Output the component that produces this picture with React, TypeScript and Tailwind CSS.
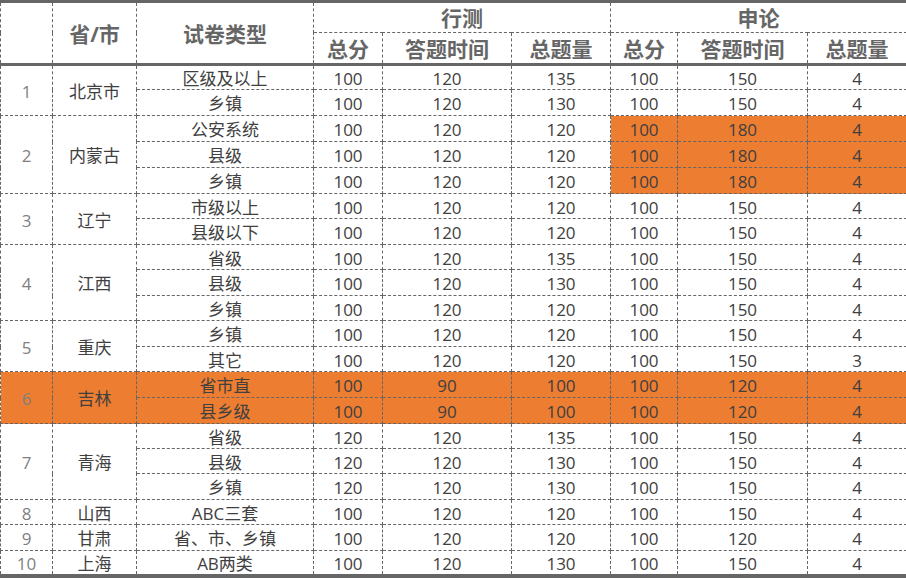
import React from "react"

type Row = { sub: string; v: string[] }
type Group = { no: string; name: string; rows: Row[]; hl?: "shenlun" | "all" }

const groups: Group[] = [
  {
    no: "1",
    name: "北京市",
    rows: [
      { sub: "区级及以上", v: ["100", "120", "135", "100", "150", "4"] },
      { sub: "乡镇", v: ["100", "120", "130", "100", "150", "4"] },
    ],
  },
  {
    no: "2",
    name: "内蒙古",
    hl: "shenlun",
    rows: [
      { sub: "公安系统", v: ["100", "120", "120", "100", "180", "4"] },
      { sub: "县级", v: ["100", "120", "120", "100", "180", "4"] },
      { sub: "乡镇", v: ["100", "120", "120", "100", "180", "4"] },
    ],
  },
  {
    no: "3",
    name: "辽宁",
    rows: [
      { sub: "市级以上", v: ["100", "120", "120", "100", "150", "4"] },
      { sub: "县级以下", v: ["100", "120", "120", "100", "150", "4"] },
    ],
  },
  {
    no: "4",
    name: "江西",
    rows: [
      { sub: "省级", v: ["100", "120", "135", "100", "150", "4"] },
      { sub: "县级", v: ["100", "120", "130", "100", "150", "4"] },
      { sub: "乡镇", v: ["100", "120", "120", "100", "150", "4"] },
    ],
  },
  {
    no: "5",
    name: "重庆",
    rows: [
      { sub: "乡镇", v: ["100", "120", "120", "100", "150", "4"] },
      { sub: "其它", v: ["100", "120", "120", "100", "150", "3"] },
    ],
  },
  {
    no: "6",
    name: "吉林",
    hl: "all",
    rows: [
      { sub: "省市直", v: ["100", "90", "100", "100", "120", "4"] },
      { sub: "县乡级", v: ["100", "90", "100", "100", "120", "4"] },
    ],
  },
  {
    no: "7",
    name: "青海",
    rows: [
      { sub: "省级", v: ["120", "120", "135", "100", "150", "4"] },
      { sub: "县级", v: ["120", "120", "130", "100", "150", "4"] },
      { sub: "乡镇", v: ["120", "120", "130", "100", "150", "4"] },
    ],
  },
  { no: "8", name: "山西", rows: [{ sub: "ABC三套", v: ["100", "120", "120", "100", "150", "4"] }] },
  { no: "9", name: "甘肃", rows: [{ sub: "省、市、乡镇", v: ["100", "120", "120", "100", "120", "4"] }] },
  { no: "10", name: "上海", rows: [{ sub: "AB两类", v: ["100", "120", "130", "100", "150", "4"] }] },
]

const widths = [52, 84, 177, 69, 129, 99, 67, 130, 99]
// row heights taken from the grid lines of the sheet
const heights = [25, 26, 26, 26, 26, 25, 26, 25, 26, 25, 26, 25, 26, 26, 25, 25, 26, 25, 26, 25]
const cell = "border border-dashed border-[#666] p-0 pt-[2px] text-center align-middle"
const topLine = " border-t-[3px] [border-top-style:solid]"
const headLine = " border-b-[3px] [border-bottom-style:solid]"
const head = cell + " text-[21px] font-bold text-[#666]"
const orange = "bg-[#ED7D31]"

export default function App() {
  let idx = 0
  return (
    <div
      className="w-[906px] h-[578px] bg-white overflow-hidden"
      style={{ fontFamily: '"Open Sans", "Noto Sans CJK SC", sans-serif' }}
    >
      <table className="w-[906px] table-fixed border-collapse text-[17px] leading-none text-[#404040]">
        <colgroup>
          {widths.map((w, i) => (
            <col key={i} style={{ width: w }} />
          ))}
        </colgroup>
        <thead>
          <tr>
            <th rowSpan={2} className={head + topLine + headLine}></th>
            <th rowSpan={2} className={head + topLine + headLine}>
              省/市
            </th>
            <th rowSpan={2} className={head + topLine + headLine}>
              试卷类型
            </th>
            <th colSpan={3} className={head + topLine + " h-[31px]"}>
              行测
            </th>
            <th colSpan={3} className={head + topLine + " h-[31px]"}>
              申论
            </th>
          </tr>
          <tr>
            {["总分", "答题时间", "总题量", "总分", "答题时间", "总题量"].map((t, i) => (
              <th key={i} className={head + headLine + " h-[32px]"}>
                {t}
              </th>
            ))}
          </tr>
        </thead>
        <tbody>
          {groups.map((g, gi) =>
            g.rows.map((r, ri) => {
              const h = heights[idx++]
              const last = gi === groups.length - 1
              const bottom = last ? " border-b-[4px] [border-bottom-style:solid]" : ""
              const all = g.hl === "all" ? " " + orange : ""
              return (
                <tr key={g.no + ri} style={{ height: h }}>
                  {ri === 0 && (
                    <td rowSpan={g.rows.length} className={cell + " text-[#7f7f7f]" + all + bottom}>
                      {g.no}
                    </td>
                  )}
                  {ri === 0 && (
                    <td rowSpan={g.rows.length} className={cell + all + bottom}>
                      {g.name}
                    </td>
                  )}
                  <td className={cell + all + bottom}>{r.sub}</td>
                  {r.v.map((v, vi) => (
                    <td
                      key={vi}
                      className={cell + all + bottom + (g.hl === "shenlun" && vi >= 3 ? " " + orange : "")}
                    >
                      {v}
                    </td>
                  ))}
                </tr>
              )
            })
          )}
        </tbody>
      </table>
    </div>
  )
}
